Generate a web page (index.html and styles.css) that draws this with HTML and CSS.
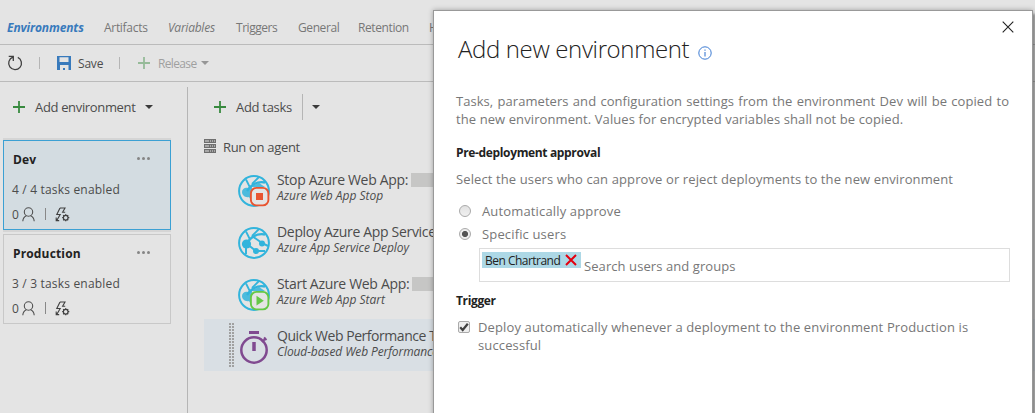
FILE: index.html
```html
<!DOCTYPE html>
<html lang="en">
<head>
<meta charset="utf-8">
<title>Release definition</title>
<link rel="stylesheet" href="styles.css">
</head>
<body>
<svg class="defs" width="0" height="0" aria-hidden="true">
  <defs>
    <symbol id="plus" viewBox="0 0 12 12"><path d="M6 0v12M0 6h12" stroke="#388a3f" stroke-width="1.8" fill="none"/></symbol>
    <symbol id="caret" viewBox="0 0 8 4"><path d="M0 0h8L4 4z" fill="currentColor"/></symbol>
    <symbol id="person" viewBox="0 0 13 15"><g fill="none" stroke="#505050" stroke-width="1.1"><circle cx="6.5" cy="5" r="4.2"/><path d="M.8 14.2C1 11 3 9.4 4.4 8.8M12.2 14.2C12 11 10 9.4 8.6 8.8"/></g></symbol>
    <symbol id="bolt" viewBox="0 0 15 15"><g fill="none" stroke="#404040" stroke-width="1.1"><path d="M5 1h5L7.6 5.2h2.6M5 1L1.8 7.5h3.4L1.6 13.8M1.2 10.4v3.2h3"/><circle cx="10.7" cy="10.7" r="2.3"/><path stroke-width="1.3" d="M10.7 7.2v1.2M10.7 13v1.3M7.2 10.7h1.2M13 10.7h1.3M8.2 8.2l.9.9M12.3 12.3l.9.9M8.2 13.2l.9-.9M12.3 9.1l.9-.9"/></g></symbol>
    <symbol id="globe" viewBox="0 0 32 32"><g fill="none" stroke="#32b4dc"><circle cx="16" cy="16" r="14.9" stroke-width="2"/><path stroke-width="2.4" d="M9 16C13 10 19 6 27 7.5"/><path stroke-width="1.8" d="M8 4.5l4 8M21 2L14 9"/></g></symbol>
  </defs>
</svg>
<div class="page">
  <nav class="tabs">
    <span class="tab active">Environments</span><span class="tab artifacts">Artifacts</span><span class="tab variables">Variables</span><span class="tab triggers">Triggers</span><span class="tab general">General</span><span class="tab retention">Retention</span><span class="tab">History</span>
  </nav>
  <div class="toolbar">
    <svg class="refresh" width="16" height="16" viewBox="0 0 16 16" fill="none" stroke="#404040" stroke-width="1.3"><path d="M5.8 2.2A6.4 6.4 0 1 0 10.8 2.4M1.7 1.4h4.6v4.5"/></svg>
    <i class="sep s1"></i>
    <svg class="save" width="14" height="14" viewBox="0 0 14 14"><path fill="#387abc" d="M0 0h14v14H0z"/><path fill="#e4e4e4" d="M2.5 1.3h9V6h-9zM3 9h8.5v5H8v-2H6v2H3z"/></svg>
    <span class="label save-label">Save</span>
    <i class="sep s2"></i>
    <span class="release"><svg width="12" height="12"><use href="#plus"/></svg><span class="label">Release</span><svg class="caret" width="8" height="4"><use href="#caret"/></svg></span>
  </div>
  <div class="body">
    <aside class="environments">
      <div class="add"><svg width="12" height="12"><use href="#plus"/></svg><span class="add-env">Add environment</span><svg class="caret" width="8" height="4"><use href="#caret"/></svg></div>
      <section class="env selected">
        <header><b>Dev</b><span class="dots"><i></i><i></i><i></i></span></header>
        <p>4 / 4 tasks enabled</p>
        <footer><span>0</span><svg width="13" height="15"><use href="#person"/></svg><i class="bar"></i><svg width="15" height="15"><use href="#bolt"/></svg></footer>
      </section>
      <section class="env">
        <header><b>Production</b><span class="dots"><i></i><i></i><i></i></span></header>
        <p>3 / 3 tasks enabled</p>
        <footer><span>0</span><svg width="13" height="15"><use href="#person"/></svg><i class="bar"></i><svg width="15" height="15"><use href="#bolt"/></svg></footer>
      </section>
    </aside>
    <main class="tasks">
      <div class="add"><svg width="12" height="12"><use href="#plus"/></svg><span class="add-task">Add tasks</span><i class="add-sep"></i><svg class="caret" width="8" height="4"><use href="#caret"/></svg></div>
      <div class="agent">
        <svg width="12" height="14" viewBox="0 0 12 14"><path fill="#6f6f6f" d="M0 0h12v4H0zM0 5h12v4H0zM0 10h12v4H0z"/><path stroke="#e0e0e0" stroke-dasharray="4 1 1 1 1 1" d="M1 2h10M1 7h10M1 12h10"/></svg>
        <span>Run on agent</span>
      </div>
      <div class="task">
        <svg width="32" height="32" viewBox="0 0 32 32"><use href="#globe"/><path fill="#32b4dc" d="M4 17c0-3 3-5 6-4l11-5 6 4H14v14c-2-1-2-3-3-4-4 1-7-2-7-5z" opacity=".85"/><rect x="12.9" y="12.9" width="17.5" height="17.5" rx="5.5" fill="#e4e4e4" stroke="#e85430" stroke-width="1.9"/><path fill="#e85430" d="M18 18h7v7h-7z"/></svg>
        <div><h3>Stop Azure Web App: <i class="redacted"></i></h3><em class="stop">Azure Web App Stop</em></div>
      </div>
      <div class="task">
        <svg width="32" height="32" viewBox="0 0 32 32"><use href="#globe"/><g fill="#32b4dc"><circle cx="8.5" cy="17" r="4.6"/><circle cx="24" cy="16.5" r="3"/><circle cx="18" cy="24" r="3"/></g><path stroke="#32b4dc" stroke-width="2" fill="none" d="M14 9l10 7 6 3M9 17l9 7h9M8 19v8"/></svg>
        <div><h3>Deploy Azure App Service</h3><em class="deploy">Azure App Service Deploy</em></div>
      </div>
      <div class="task">
        <svg width="32" height="32" viewBox="0 0 32 32"><use href="#globe"/><path fill="#32b4dc" d="M4 17c0-3 3-5 6-4l11-5 6 4H14v14c-2-1-2-3-3-4-4 1-7-2-7-5z" opacity=".85"/><rect x="12.9" y="12.9" width="17.5" height="17.5" rx="5.5" fill="#e4e4e4" stroke="#64c846" stroke-width="1.9"/><path fill="#64c846" d="M18.5 16.8v9.8l7.3-4.9z"/></svg>
        <div><h3>Start Azure Web App: <i class="redacted"></i></h3><em class="start">Azure Web App Start</em></div>
      </div>
      <div class="task current">
        <i class="grip"></i>
        <svg width="32" height="36" viewBox="0 0 32 36"><g fill="none" stroke="#804a90"><circle cx="16" cy="21" r="12.7" stroke-width="2.5"/><path stroke-width="3" d="M11 3.5h10"/><path stroke-width="3.5" d="M16 13v9"/><path stroke-width="2" d="M24 13l4-4M26 8.5l2.5 2.5"/></g></svg>
        <div><h3 class="quick">Quick Web Performance Test</h3><em class="cloud">Cloud-based Web Performance Test</em></div>
      </div>
    </main>
  </div>
  <div class="dialog" role="dialog">
    <svg class="close" width="12" height="12" viewBox="0 0 12 12"><path d="M.7.7l10.6 10.6M11.3.7L.7 11.3" stroke="#222" stroke-width="1.1"/></svg>
    <h1><span>Add new environment</span><svg width="14" height="14" viewBox="0 0 14 14"><circle cx="7" cy="7" r="6.2" fill="none" stroke="#3c7bd2"/><path d="M7 6v4.6M7 3.4v1.3" stroke="#3c7bd2" stroke-width="1.1"/></svg></h1>
    <p class="intro"><span class="first">Tasks, parameters and configuration settings from the environment Dev will be copied to</span><span class="second">the new environment. Values for encrypted variables shall not be copied.</span></p>
    <h2>Pre-deployment approval</h2>
    <p class="select">Select the users who can approve or reject deployments to the new environment</p>
    <div class="option"><i class="radio"></i><span>Automatically approve</span></div>
    <div class="option"><i class="radio on"></i><span>Specific users</span></div>
    <div class="picker"><span class="chip"><span>Ben Chartrand</span><svg width="12" height="12" viewBox="0 0 12 12"><path d="M1 1l10 10M11 1L1 11" stroke="#e3000f" stroke-width="2"/></svg></span><span class="hint">Search users and groups</span></div>
    <h2 class="trigger">Trigger</h2>
    <div class="check"><i class="checkbox"><svg width="10" height="10" viewBox="0 0 10 10"><path d="M1.2 5.3L3.7 8 8.8 1.7" fill="none" stroke="#404040" stroke-width="2.2"/></svg></i><p>Deploy automatically whenever a deployment to the environment Production is<br>successful</p></div>
  </div>
</div>
</body>
</html>
```
FILE: styles.css
```css
* { box-sizing: border-box; }
body { margin: 0; font-family: "Open Sans", "Noto Sans", sans-serif; color: #4c4c4c; background: #e4e4e4; }
h1, h2, h3, p { margin: 0; font-weight: 400; }
svg { display: block; flex: none; }
.defs { position: absolute; }
.page { position: relative; width: 1035px; height: 413px; overflow: hidden; white-space: nowrap; }
.tabs { display: flex; height: 45px; padding: 18px 0 0 7px; border-bottom: 1px solid #bbb; font-size: 12px; line-height: 20px; color: #777; }
.tab { flex: none; width: 61px; }
.tab.active { width: 97px; color: #387abc; font-weight: 700; font-style: italic; letter-spacing: -.12px; }
.tab.artifacts { width: 64px; letter-spacing: -.3px; }
.tab.variables { width: 68px; font-style: italic; letter-spacing: -.25px; }
.tab.triggers { width: 62px; letter-spacing: -.45px; }
.tab.general { width: 60px; letter-spacing: -.4px; }
.tab.retention { width: 71px; letter-spacing: -.4px; }
.toolbar { display: flex; align-items: center; height: 37px; padding-left: 7px; border-bottom: 1px solid #bbb; font-size: 12px; }
.sep { width: 1px; height: 12px; background: #b5b5b5; }
.s1 { margin: 0 17px 0 16px; }
.save-label { width: 41px; margin-left: 7px; letter-spacing: -.2px; }
.release { display: flex; align-items: center; margin-left: 18px; opacity: .45; }
.release .label { width: 43px; margin-left: 8px; letter-spacing: -.65px; }
.body { display: flex; height: 331px; }
.environments { width: 187px; flex: none; padding-left: 3px; }
.add { display: flex; align-items: center; height: 50px; font-size: 13px; padding-left: 10px; }
.caret { color: #3a3a3a; }
.add-env { width: 110px; margin-left: 10px; letter-spacing: -.34px; }
.env { width: 168px; height: 90px; padding: 9px 20px 0 8px; border: 1px solid #c8c8c8; font-size: 12px; }
.env.selected { margin: 8px 0 4px; background: #d3dce1; border-color: #3ba0d3; box-shadow: 0 -2px #d5d5d5, 0 2px #d5d5d5; }
.env header { display: flex; justify-content: space-between; align-items: center; height: 18px; padding-left: 1px; color: #222; letter-spacing: .15px; }
.env p { height: 20px; line-height: 20px; margin-top: 12px; letter-spacing: .18px; }
.env footer { display: flex; align-items: center; height: 20px; margin-top: 4px; }
.env footer svg { margin-left: 3px; }
.bar { width: 1px; height: 12px; margin: 0 6px 0 10px; background: #888; }
.dots { display: flex; gap: 2px; }
.dots i { width: 3px; height: 3px; margin-top: -1px; border-radius: 50%; background: #858585; }
.tasks { flex: 1; margin-top: 5px; padding-left: 16px; border-left: 1px solid #b5b5b5; }
.tasks .add { height: 40px; }
.add-task { width: 66px; margin-left: 10px; letter-spacing: -.3px; }
.add-sep { width: 1px; height: 26px; margin-right: 9px; background: #b5b5b5; }
.agent { display: flex; align-items: center; gap: 7px; height: 36px; padding-top: 2px; font-size: 13px; letter-spacing: -.32px; }
.agent span { padding-top: 2px; }
.task { display: flex; align-items: center; height: 52px; padding-left: 34px; }
.task > svg { margin-top: 4px; }
.task > div { margin-left: 7px; margin-top: -5px; }
.task h3 { display: flex; height: 17px; font-size: 14px; line-height: 17px; letter-spacing: -.32px; }
.task h3.quick { letter-spacing: -.45px; }
.task em { display: block; height: 15px; font-size: 12px; line-height: 15px; letter-spacing: -.02px; }
.task .cloud { letter-spacing: -.1px; }
.redacted { flex: none; width: 60px; height: 14px; margin: 2px 0 0 3px; background: #c6c6c5; }
.task.current { padding-left: 25px; background: #d9dfe4; }
.task .grip { width: 5px; height: 44px; margin-right: 4px; background: repeating-linear-gradient(transparent 0 2px, #d9dfe4 2px 3px), repeating-linear-gradient(90deg, #a0a0a0 0 2px, #d9dfe4 2px 3px); }
.dialog { position: absolute; left: 433px; top: 10px; width: 600px; height: 410px; padding: 0 23px 0 22px; background: #fff; border: 1px solid #999; color: #777; font-size: 13px; box-shadow: 0 0 5px rgba(0,0,0,.3), 3px 4px 2px rgba(0,0,0,.28); }
.close { position: absolute; right: 18px; top: 10px; }
h1 { display: flex; height: 75px; padding-top: 22px; color: #222; font-size: 24px; line-height: 32px; font-weight: 300; letter-spacing: -.36px; }
h1 span { width: 240px; padding-left: 2px; }
h1 svg { margin: 13px 0 0 2px; }
.intro { margin-top: 6px; line-height: 18px; }
.intro span { display: block; }
.first { width: 553px; text-align-last: justify; letter-spacing: .05px; }
.second { letter-spacing: .09px; }
h2 { height: 20px; margin-top: 15px; color: #222; font-size: 12px; line-height: 20px; font-weight: 700; letter-spacing: -.35px; }
.select { margin-top: 7px; line-height: 18px; letter-spacing: .11px; }
.option { display: flex; align-items: center; height: 23px; padding-left: 3px; letter-spacing: .15px; }
.select + .option { margin-top: 11px; }
.radio { width: 12px; height: 12px; margin-right: 11px; border: 1px solid #aaa; border-radius: 50%; background: linear-gradient(#e2e2e2, #f0f0f0); }
.radio.on { background: radial-gradient(circle, #555 2.7px, #eee 3.4px); }
.picker { display: flex; width: 531px; height: 34px; margin: 3px 0 0 23px; padding: 3px 2px; border: 1px solid #ddd; }
.chip { display: flex; width: 99px; height: 16px; padding-left: 3px; line-height: 17px; background: #add8e6; color: #222; font-size: 12px; letter-spacing: -.52px; }
.chip span { width: 80px; }
.chip svg { margin-top: 2px; }
.hint { margin: 5px 0 0 3px; line-height: 18px; letter-spacing: .08px; }
.trigger { margin-top: 9px; }
.check { display: flex; margin-top: 7px; padding-left: 2px; line-height: 18px; letter-spacing: .13px; }
.checkbox { width: 12px; height: 12px; margin: 3px 8px 0 0; border: 1px solid #aaa; border-radius: 2px; background: #eee; }
```
